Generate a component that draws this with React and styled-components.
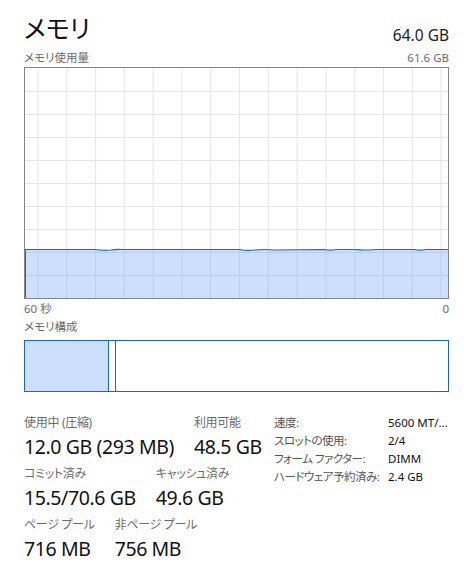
import React from "react";
import styled, { createGlobalStyle } from "styled-components";

const GlobalStyle = createGlobalStyle`
  body {
    margin: 0;
    background: #fff;
    font-family: "Noto Sans", "Noto Sans CJK JP", sans-serif;
    font-feature-settings: "palt";
    color: #1a1a1a;
  }
`;

const Page = styled.div`
  width: 464px;
  height: 570px;
  box-sizing: border-box;
  padding: 10px 15px 0 24px;
  overflow: hidden;
`;

const Header = styled.div`
  display: flex;
  justify-content: space-between;
  align-items: flex-end;
  height: 36px;
`;

const Title = styled.h1`
  margin: 0;
  font-size: 25px;
  font-weight: 400;
  line-height: 36px;
  color: #111;
`;

const Total = styled.div`
  font-size: 15.5px;
  line-height: 22px;
`;

const Caption = styled.div`
  display: flex;
  justify-content: space-between;
  font-size: 11.5px;
  line-height: 18px;
  color: #6b6b6b;
  margin-top: ${(p) => p.$top || 0}px;
`;

const ChartBox = styled.div`
  border: 1px solid #858585;
  height: 230px;
  background: #fff;
  line-height: 0;
`;

const BarBox = styled.div`
  display: flex;
  height: 50px;
  border: 1px solid #1b63d6;
  margin-top: 4px;
`;

const Segment = styled.div`
  width: ${(p) => p.$w}px;
  flex: ${(p) => (p.$grow ? 1 : "none")};
  background: ${(p) => p.$bg};
  border-right: ${(p) => (p.$grow ? "none" : "1px solid #1b63d6")};
`;

const Stats = styled.div`
  display: flex;
  margin-top: 22px;
`;

const LeftStats = styled.div`
  display: flex;
  flex-direction: column;
  gap: 4px;
  width: 250px;
`;

const StatRow = styled.div`
  display: flex;
  gap: 20px;
`;

const Stat = styled.div`
  display: flex;
  flex-direction: column;
  gap: 1px;
`;

const Label = styled.div`
  font-size: 12px;
  line-height: 18px;
  letter-spacing: -0.3px;
  color: #6b6b6b;
  white-space: nowrap;
`;

const Value = styled.div`
  font-size: 19.5px;
  line-height: 28px;
  letter-spacing: -0.4px;
  color: #111;
  white-space: nowrap;
`;

const Details = styled.div`
  display: grid;
  grid-template-columns: 114px auto;
  grid-auto-rows: 18px;
  align-content: start;
  font-size: 11.5px;
  line-height: 18px;
`;

const DetailKey = styled.div`
  color: #555;
  letter-spacing: -0.5px;
  white-space: nowrap;
`;

const DetailVal = styled.div`
  color: #111;
  white-space: nowrap;
`;

const W = 424;
const H = 230;
const vLines = Array.from({ length: 15 }, (_, i) => 13 + i * 28.86);
const hLines = Array.from({ length: 9 }, (_, i) => 23 + i * 23);

const linePath =
  "M0 181.5 L70 181.5 Q78 182.8 86 182 Q92 181 98 181.5 L215 181.5 Q222 183 230 182 Q240 181 250 182 L300 181.5 Q306 182.6 312 181.5 L330 181.5 Q340 182.5 352 181.5 L390 181.5 Q396 182.6 402 181.5 L424 181.5";

function UsageChart() {
  return (
    <ChartBox>
      <svg width="100%" height={H} viewBox={`0 0 ${W} ${H}`} preserveAspectRatio="none">
        {vLines.map((x) => (
          <line key={"v" + x} x1={x} x2={x} y1={0} y2={H} stroke="#e6e6e6" strokeWidth="1" />
        ))}
        {hLines.map((y) => (
          <line key={"h" + y} x1={0} x2={W} y1={y + 0.5} y2={y + 0.5} stroke="#e6e6e6" strokeWidth="1" />
        ))}
        <path d={`${linePath} L424 ${H} L0 ${H} Z`} fill="#cce0fd" />
        {vLines.map((x) => (
          <line key={"fv" + x} x1={x} x2={x} y1={182} y2={H} stroke="#b9cfec" strokeWidth="1" />
        ))}
        {hLines
          .filter((y) => y > 182)
          .map((y) => (
            <line key={"fh" + y} x1={0} x2={W} y1={y + 0.5} y2={y + 0.5} stroke="#b9cfec" strokeWidth="1" />
          ))}
        <line x1={0.5} x2={0.5} y1={181} y2={H} stroke="#1b63d6" strokeWidth="1" />
        <path d={linePath} fill="none" stroke="#1b63d6" strokeWidth="1.2" />
      </svg>
    </ChartBox>
  );
}

export default function App() {
  return (
    <>
      <GlobalStyle />
      <Page>
        <Header>
          <Title>メモリ</Title>
          <Total>64.0 GB</Total>
        </Header>
        <Caption $top={3}>
          <span>メモリ使用量</span>
          <span>61.6 GB</span>
        </Caption>
        <UsageChart />
        <Caption $top={1}>
          <span>60 秒</span>
          <span>0</span>
        </Caption>
        <Caption>
          <span>メモリ構成</span>
        </Caption>
        <BarBox>
          <Segment $w={83} $bg="#cce0fd" />
          <Segment $w={6} $bg="#fff" />
          <Segment $grow $bg="#fff" />
        </BarBox>
        <Stats>
          <LeftStats>
            <StatRow>
              <Stat>
                <Label>使用中 (圧縮)</Label>
                <Value>12.0 GB (293 MB)</Value>
              </Stat>
              <Stat>
                <Label>利用可能</Label>
                <Value>48.5 GB</Value>
              </Stat>
            </StatRow>
            <StatRow>
              <Stat>
                <Label>コミット済み</Label>
                <Value>15.5/70.6 GB</Value>
              </Stat>
              <Stat>
                <Label>キャッシュ済み</Label>
                <Value>49.6 GB</Value>
              </Stat>
            </StatRow>
            <StatRow>
              <Stat>
                <Label>ページ プール</Label>
                <Value>716 MB</Value>
              </Stat>
              <Stat>
                <Label>非ページ プール</Label>
                <Value>756 MB</Value>
              </Stat>
            </StatRow>
          </LeftStats>
          <Details>
            <DetailKey>速度:</DetailKey>
            <DetailVal>5600 MT/...</DetailVal>
            <DetailKey>スロットの使用:</DetailKey>
            <DetailVal>2/4</DetailVal>
            <DetailKey>フォーム ファクター:</DetailKey>
            <DetailVal>DIMM</DetailVal>
            <DetailKey>ハードウェア予約済み:</DetailKey>
            <DetailVal>2.4 GB</DetailVal>
          </Details>
        </Stats>
      </Page>
    </>
  );
}
